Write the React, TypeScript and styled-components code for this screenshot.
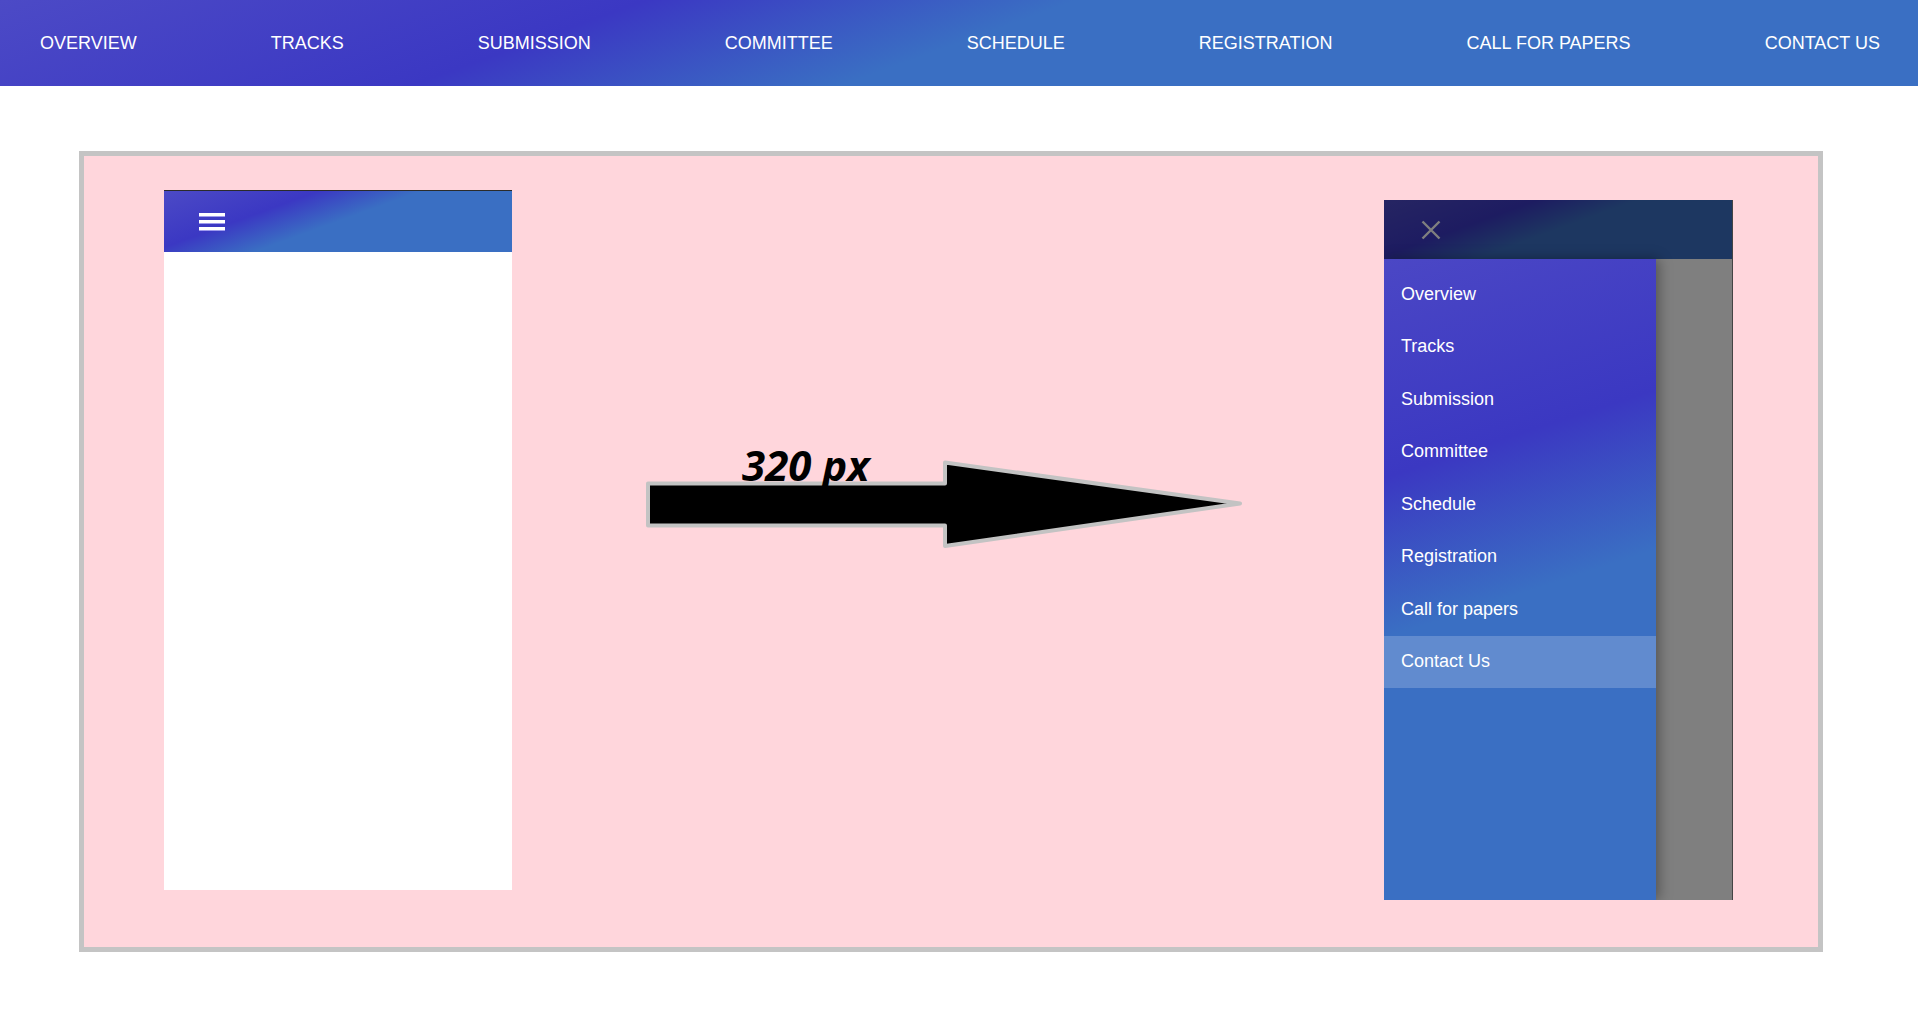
import React from "react";
import styled, { createGlobalStyle } from "styled-components";

const GlobalStyle = createGlobalStyle`
  html, body {
    margin: 0;
    padding: 0;
    background: #ffffff;
    font-family: "Liberation Sans", Arial, sans-serif;
  }
  * { box-sizing: border-box; }
`;

const brandGradient = `linear-gradient(160deg, #4c4ac6 0%, #3b38c3 30%, #3a6fc3 50%, #3a6fc3 100%)`;

const NavBar = styled.nav`
  height: 86px;
  display: flex;
  align-items: center;
  justify-content: space-between;
  padding: 0 38px 0 40px;
  background: ${brandGradient};
`;

const NavLink = styled.a`
  color: #ffffff;
  font-family: "Liberation Sans", Arial, sans-serif;
  font-size: 18px;
  text-transform: uppercase;
  text-decoration: none;
  white-space: nowrap;
`;

const Frame = styled.section`
  margin: 65px 0 0 79px;
  width: 1744px;
  height: 801px;
  border: 5px solid #c4c4c4;
  background: #ffd6dc;
  display: flex;
  align-items: flex-start;
  padding: 34px 0 0 80px;
`;

const Phone = styled.div<{ $offset?: number; $width: number }>`
  position: relative;
  flex: none;
  width: ${(p) => p.$width}px;
  height: 700px;
  margin-top: ${(p) => p.$offset ?? 0}px;
  background: #ffffff;
  overflow: hidden;
`;

const LeftPhone = styled(Phone)`
  border-top: 1px solid #2b2b2b;
`;

const RightPhone = styled(Phone)`
  border-right: 1px solid #444444;
`;

const PhoneHeader = styled.header<{ $height: number; $pad: number }>`
  height: ${(p) => p.$height}px;
  display: flex;
  align-items: center;
  padding-left: ${(p) => p.$pad}px;
  background: ${brandGradient};
`;

const Burger = styled.div`
  width: 26px;
  display: flex;
  flex-direction: column;
  gap: 4px;
`;

const BurgerLine = styled.span`
  display: block;
  height: 3px;
  background: #ffffff;
  box-shadow: 0 1px 0 rgba(200, 195, 255, 0.7);
`;

const ArrowArea = styled.div`
  flex: none;
  width: 872px;
  padding: 270px 0 0 134px;
`;

const ArrowFigure = styled.div`
  position: relative;
  width: 600px;
  height: 90px;
`;

const ArrowLabel = styled.span`
  position: absolute;
  left: 96px;
  top: -16px;
  font-family: "Open Sans", "DejaVu Sans", sans-serif;
  font-weight: 700;
  font-style: italic;
  font-size: 42px;
  line-height: 42px;
  color: #000000;
  white-space: nowrap;
`;

const Backdrop = styled.div`
  position: absolute;
  inset: 0;
  background: rgba(0, 0, 0, 0.5);
`;

const Drawer = styled.ul`
  position: absolute;
  top: 59px;
  left: 0;
  bottom: 0;
  width: 272px;
  margin: 0;
  padding: 9px 0 0;
  list-style: none;
  background: linear-gradient(162deg, #4b47c5 0%, #3b38c2 30%, #3a6fc3 52%, #3a6fc3 100%);
  box-shadow: 3px 0 12px rgba(0, 0, 0, 0.35);
`;

const DrawerItem = styled.li<{ $active?: boolean }>`
  height: 52.5px;
  display: flex;
  align-items: center;
  padding-left: 17px;
  color: #ffffff;
  font-family: "Liberation Sans", Arial, sans-serif;
  font-size: 18px;
  background: ${(p) => (p.$active ? "rgba(255, 255, 255, 0.2)" : "transparent")};
`;

const CloseIcon = () => (
  <svg width="20" height="20" viewBox="0 0 20 20" aria-hidden="true">
    <path d="M1.5 1.5 L18.5 18.5 M18.5 1.5 L1.5 18.5" stroke="#ffffff" strokeWidth="2.4" strokeLinecap="butt" />
  </svg>
);

const BigArrow = () => (
  <svg width="600" height="90" viewBox="0 0 600 90" aria-hidden="true" style={{ display: "block" }}>
    <polygon
      points="2,23.5 299,23.5 299,2.5 594,43.5 299,86 299,65.5 2,65.5"
      fill="#000000"
      stroke="#c3c3c3"
      strokeWidth="4"
      strokeLinejoin="round"
    />
  </svg>
);

const topLinks = [
  "Overview",
  "Tracks",
  "Submission",
  "Committee",
  "Schedule",
  "Registration",
  "Call for papers",
  "Contact Us",
];

export default function App() {
  return (
    <>
      <GlobalStyle />
      <NavBar>
        {topLinks.map((l) => (
          <NavLink key={l} href="#">
            {l}
          </NavLink>
        ))}
      </NavBar>
      <Frame>
        <LeftPhone $width={348}>
          <PhoneHeader $height={61} $pad={35}>
            <Burger>
              <BurgerLine />
              <BurgerLine />
              <BurgerLine />
            </Burger>
          </PhoneHeader>
        </LeftPhone>
        <ArrowArea>
          <ArrowFigure>
            <BigArrow />
            <ArrowLabel>320 px</ArrowLabel>
          </ArrowFigure>
        </ArrowArea>
        <RightPhone $width={349} $offset={10}>
          <PhoneHeader $height={59} $pad={37}>
            <CloseIcon />
          </PhoneHeader>
          <Backdrop />
          <Drawer>
            {topLinks.map((l, i) => (
              <DrawerItem key={l} $active={i === topLinks.length - 1}>
                {l}
              </DrawerItem>
            ))}
          </Drawer>
        </RightPhone>
      </Frame>
    </>
  );
}
